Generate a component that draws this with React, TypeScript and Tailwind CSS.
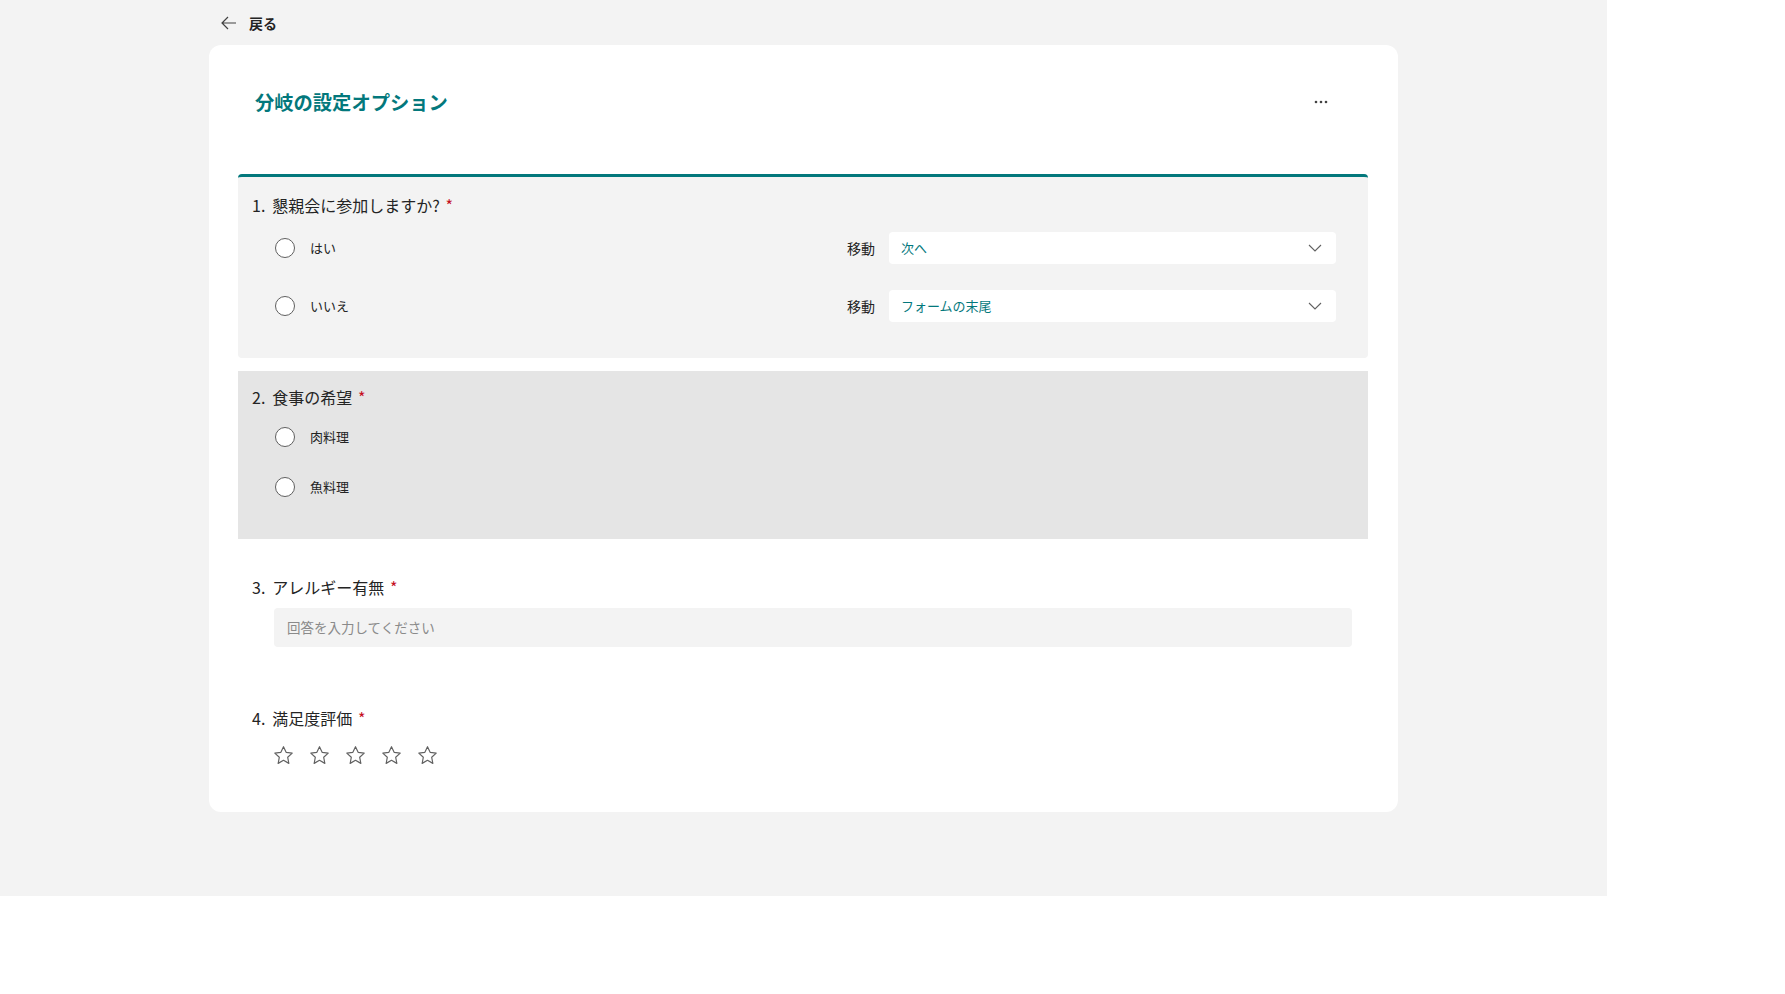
import React from 'react';

const font = { fontFamily: '"Noto Sans CJK JP", "Noto Sans", sans-serif' };

const Radio: React.FC<{ label: string }> = ({ label }) => (
  <div className="flex items-center h-8">
    <span className="w-5 h-5 rounded-full border border-[#5f5f5f] bg-white shrink-0" />
    <span className="ml-[15px] text-[13px] text-[#242424]">{label}</span>
  </div>
);

const Chevron = () => (
  <svg width="14" height="8" viewBox="0 0 14 8" fill="none">
    <path d="M1 1l6 6 6-6" stroke="#616161" strokeWidth="1.1" />
  </svg>
);

const Branch: React.FC<{ label: string; target: string }> = ({ label, target }) => (
  <div className="flex items-center pr-[32px]">
    <div className="flex-1">
      <Radio label={label} />
    </div>
    <span className="text-[14px] text-[#242424] mr-[14px]">移動</span>
    <div className="w-[447px] h-8 bg-white rounded-[4px] flex items-center justify-between pl-3 pr-[14px]">
      <span className="text-[13px] text-[#03787c]">{target}</span>
      <Chevron />
    </div>
  </div>
);

const Star = () => (
  <svg width="21" height="21" viewBox="0 0 20 20" fill="none">
    <path
      d="M10 1.6l2.5 5.4 5.8.7-4.3 4 1.1 5.8L10 14.6l-5.1 2.9 1.1-5.8-4.3-4 5.8-.7z"
      stroke="#616161"
      strokeWidth="1.1"
      strokeLinejoin="round"
    />
  </svg>
);

const Question: React.FC<{ n: number; text: string }> = ({ n, text }) => (
  <div className="text-[16px] leading-6 text-[#242424] pl-[14px]">
    <span className="mr-[7px]">{n}.</span>
    {text} <span className="text-[#c50f1f] ml-[2px]">*</span>
  </div>
);

export default function App() {
  return (
    <div className="w-full h-[994px] bg-white" style={font}>
      <div className="w-[1607px] h-[896px] bg-[#f3f3f3] pl-[209px]">
        <div className="h-[45px] flex items-center pl-[12px] pt-[1px]">
          <svg width="16" height="14" viewBox="0 0 16 14" fill="none">
            <path d="M7 1L1 7l6 6M1 7h14" stroke="#424242" strokeWidth="1.2" />
          </svg>
          <span className="ml-[12px] text-[14px] font-bold text-[#242424]">戻る</span>
        </div>

        <div className="w-[1189px] h-[767px] bg-white rounded-xl pl-[29px] pr-[30px]">
          <div className="flex items-center justify-between pt-[43px] pl-[17px] pr-[40px]">
            <h1 className="text-[19.3px] leading-7 font-bold text-[#03787c]">分岐の設定オプション</h1>
            <svg width="14" height="4" viewBox="0 0 14 4">
              <circle cx="2" cy="2" r="1.3" fill="#424242" />
              <circle cx="7" cy="2" r="1.3" fill="#424242" />
              <circle cx="12" cy="2" r="1.3" fill="#424242" />
            </svg>
          </div>

          <div className="mt-[58px] h-[184px] bg-[#f3f3f3] border-t-[3px] border-[#03787c] rounded-[4px] pt-4">
            <Question n={1} text="懇親会に参加しますか?" />
            <div className="pl-[37px] mt-[15px] flex flex-col gap-[26px]">
              <Branch label="はい" target="次へ" />
              <Branch label="いいえ" target="フォームの末尾" />
            </div>
          </div>

          <div className="mt-[13px] h-[168px] bg-[#e5e5e5] pt-[14px]">
            <Question n={2} text="食事の希望" />
            <div className="pl-[37px] mt-[12px] flex flex-col gap-[18px]">
              <Radio label="肉料理" />
              <Radio label="魚料理" />
            </div>
          </div>

          <div className="pt-[36px]">
            <Question n={3} text="アレルギー有無" />
            <div className="ml-[36px] mr-[16px] mt-[9px] h-[39px] bg-[#f3f3f3] rounded-[4px] flex items-center pl-[13px] text-[13.5px] text-[#8a8a8a]">
              回答を入力してください
            </div>
          </div>

          <div className="pt-[59px]">
            <Question n={4} text="満足度評価" />
            <div className="ml-[35px] mt-[15px] flex gap-[15px]">
              <Star />
              <Star />
              <Star />
              <Star />
              <Star />
            </div>
          </div>
        </div>
      </div>
    </div>
  );
}
